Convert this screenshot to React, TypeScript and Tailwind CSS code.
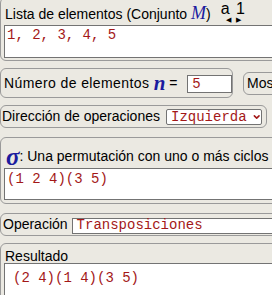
import { ChevronDown } from "lucide-react"

const mono = "font-['Liberation_Mono','Courier_New',monospace] text-[14px] text-[#a31818]"
const panel = "rounded-[6px] border border-[#9a9a9a]"
const box = "border border-[#737373] bg-white"

const App = () => {
  return (
    <div className="h-[295px] w-[272px] overflow-hidden bg-[#ebe9e2] font-['Liberation_Sans',Arial,sans-serif] text-[14px] text-black">
      <div className="flex w-[300px] flex-col">
        {/* lista de elementos */}
        <div className={`${panel} -mt-[3px] h-[64px] pl-[3px] pt-[4px]`}>
          <div className="flex h-[18px] items-start">
            <span className="pl-[1px] pt-[3px] leading-[16px]">
              Lista de elementos (Conjunto{" "}
              <span className="font-['Liberation_Serif',serif] text-[18px] italic text-[#1b1b9e]">M</span>)
            </span>
            <div className="ml-[10px] flex flex-col items-center">
              <span className="text-[16px] leading-[14px] tracking-[1px]">a 1</span>
              <span className="mt-[1px] flex gap-[5px] text-[7px] leading-[6px]">
                <span>◀</span>
                <span>▶</span>
              </span>
            </div>
          </div>
          <div className={`${box} ${mono} mt-[5px] h-[33px] px-[2px] pt-[1px] leading-[16px]`}>
            1, 2, 3, 4, 5
          </div>
        </div>

        {/* numero de elementos */}
        <div className="mt-[7px] flex items-start gap-[10px]">
          <div className={`${panel} flex h-[30px] w-[233px] items-center pl-[3px]`}>
            <span className="whitespace-pre pt-[1px] tracking-[0.4px]">Número de elementos </span>
            <span className="font-['Liberation_Serif',serif] text-[21px] font-bold italic leading-[20px] text-[#1b1b9e]">n</span>
            <span className="whitespace-pre pt-[1px]"> = </span>
            <div className={`${box} ${mono} ml-[6px] mt-[2px] h-[18px] w-[51px] pl-[4px] leading-[16px]`}>5</div>
          </div>
          <div className={`${panel} mt-[4px] flex h-[23px] w-[60px] items-center pl-[3px]`}>Mostrar</div>
        </div>

        {/* direccion */}
        <div className={`${panel} mt-[7px] flex h-[23px] w-[267px] items-center pl-[1px]`}>
          <span>Dirección de operaciones</span>
          <div className={`${mono} ml-[6px] flex h-[16px] w-[96px] items-center rounded-[2px] border border-[#737373] bg-white pl-[4px] leading-[14px]`}>
            <span>Izquierda</span>
            <ChevronDown size={12} strokeWidth={4} className="ml-[5px] text-[#a31818]" />
          </div>
        </div>

        {/* sigma */}
        <div className={`${panel} mt-[9px] h-[67px] pl-[3px] pt-[8px]`}>
          <div className="flex h-[21px] items-center">
            <span className="pl-[2px] font-['Liberation_Serif',serif] text-[25px] font-bold italic leading-[20px] text-[#1b1b9e]">σ</span>
            <span>: Una permutación con uno o más ciclos</span>
          </div>
          <div className={`${box} ${mono} mt-[1px] h-[32px] px-[2px] pt-[2px] leading-[16px]`}>
            (1 2 4)(3 5)
          </div>
        </div>

        {/* operacion */}
        <div className={`${panel} mt-[9px] flex h-[23px] items-end pb-[1px] pl-[2px]`}>
          <span className="self-center">Operación</span>
          <div className={`${box} ${mono} ml-[4px] h-[16px] flex-1 pl-[4px] leading-[13px]`}>Transposiciones</div>
        </div>

        {/* resultado */}
        <div className={`${panel} mt-[7px] h-[80px] pl-[3px] pt-[5px]`}>
          <div className="h-[14px] pl-[1px] leading-[14px]">Resultado</div>
          <div className={`${box} ${mono} h-[60px] pl-[8px] pt-[6px] leading-[16px]`}>
            (2 4)(1 4)(3 5)
          </div>
        </div>
      </div>
    </div>
  )
}

export default App
